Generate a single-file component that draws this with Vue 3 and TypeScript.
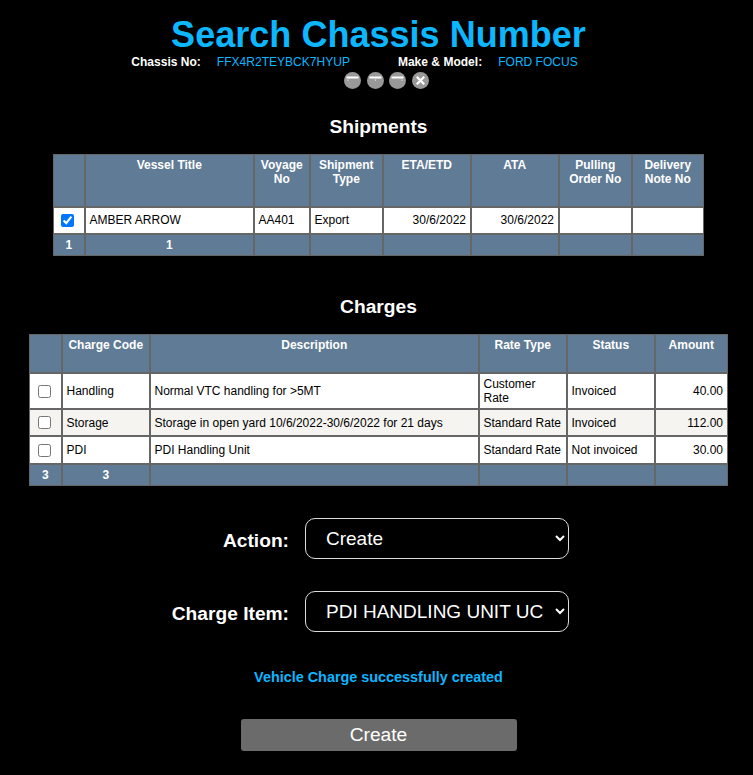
<script setup lang="ts">
import { ref } from 'vue'

interface Column { title: string; width: number }

const shipCols: Column[] = [
  { title: '', width: 32 },
  { title: 'Vessel Title', width: 169 },
  { title: 'Voyage No', width: 56 },
  { title: 'Shipment Type', width: 73 },
  { title: 'ETA/ETD', width: 88 },
  { title: 'ATA', width: 88 },
  { title: 'Pulling Order No', width: 73 },
  { title: 'Delivery Note No', width: 72 },
]

const chargeCols: Column[] = [
  { title: '', width: 33 },
  { title: 'Charge Code', width: 88 },
  { title: 'Description', width: 329 },
  { title: 'Rate Type', width: 88 },
  { title: 'Status', width: 88 },
  { title: 'Amount', width: 73 },
]

const charges = [
  { code: 'Handling', desc: 'Normal VTC handling for >5MT', rate: 'Customer Rate', status: 'Invoiced', amount: '40.00', cls: 'tall' },
  { code: 'Storage', desc: 'Storage in open yard 10/6/2022-30/6/2022 for 21 days', rate: 'Standard Rate', status: 'Invoiced', amount: '112.00', cls: 'alt' },
  { code: 'PDI', desc: 'PDI Handling Unit', rate: 'Standard Rate', status: 'Not invoiced', amount: '30.00', cls: 'last' },
]

const action = ref('Create')
const item = ref('PDI HANDLING UNIT UC')
const dotXs = [4, 8.5, 13]
</script>

<template>
  <main class="page">
    <h1 class="title">Search Chassis Number</h1>
    <div class="meta">
      <span class="pair"><b class="meta-label">Chassis No:</b><span class="meta-value">FFX4R2TEYBCK7HYUP</span></span>
      <span class="pair"><b class="meta-label">Make &amp; Model:</b><span class="meta-value">FORD FOCUS</span></span>
    </div>
    <div class="tools">
      <svg v-for="x in dotXs" :key="x" class="tool" viewBox="0 0 17 17" aria-hidden="true">
        <circle cx="8.5" cy="8.5" r="8.5" fill="#999" />
        <rect x="2.5" y="4.5" width="12" height="2" fill="#fff" />
        <rect :x="x - 0.6" y="7.5" width="1.2" height="1.2" fill="#e5e5e5" />
      </svg>
      <svg class="tool" viewBox="0 0 17 17" aria-hidden="true">
        <circle cx="8.5" cy="8.5" r="8.5" fill="#999" />
        <path d="M4.8 4.8 12.2 12.2M12.2 4.8 4.8 12.2" stroke="#fff" stroke-width="2.2" />
      </svg>
    </div>

    <h2 class="section ship-title">Shipments</h2>
    <table class="grid ship">
      <colgroup><col v-for="c in shipCols" :key="c.title" :style="{ width: c.width + 'px' }" /></colgroup>
      <thead>
        <tr class="head-ship"><th v-for="c in shipCols" :key="c.title">{{ c.title }}</th></tr>
      </thead>
      <tbody>
        <tr class="row-ship">
          <td class="center"><input type="checkbox" class="check" checked /></td>
          <td>AMBER ARROW</td>
          <td>AA401</td>
          <td>Export</td>
          <td class="right">30/6/2022</td>
          <td class="right">30/6/2022</td>
          <td></td>
          <td></td>
        </tr>
      </tbody>
      <tfoot>
        <tr class="foot"><td>1</td><td>1</td><td></td><td></td><td></td><td></td><td></td><td></td></tr>
      </tfoot>
    </table>

    <h2 class="section charge-title">Charges</h2>
    <table class="grid charge">
      <colgroup><col v-for="c in chargeCols" :key="c.title" :style="{ width: c.width + 'px' }" /></colgroup>
      <thead>
        <tr class="head-charge"><th v-for="c in chargeCols" :key="c.title">{{ c.title }}</th></tr>
      </thead>
      <tbody>
        <tr v-for="r in charges" :key="r.code" class="row-charge" :class="r.cls">
          <td class="center"><input type="checkbox" class="check" /></td>
          <td>{{ r.code }}</td>
          <td>{{ r.desc }}</td>
          <td>{{ r.rate }}</td>
          <td>{{ r.status }}</td>
          <td class="right">{{ r.amount }}</td>
        </tr>
      </tbody>
      <tfoot>
        <tr class="foot"><td>3</td><td>3</td><td></td><td></td><td></td><td></td></tr>
      </tfoot>
    </table>

    <div class="form">
      <label class="field">
        <span class="field-label">Action:</span>
        <select v-model="action" class="select"><option>Create</option></select>
      </label>
      <label class="field">
        <span class="field-label">Charge Item:</span>
        <select v-model="item" class="select"><option>PDI HANDLING UNIT UC</option></select>
      </label>
    </div>

    <p class="message">Vehicle Charge successfully created</p>
    <button type="button" class="submit">Create</button>
  </main>
</template>

<style scoped>
.page {
  display: flex;
  flex-direction: column;
  align-items: center;
  box-sizing: border-box;
  height: 775px;
  padding-left: 4px;
  overflow: hidden;
  color: #fff;
  font-family: "Liberation Sans", Arial, sans-serif;
}
.title {
  margin: 14px 0 0;
  font-size: 36px;
  line-height: 41px;
  font-weight: 700;
  letter-spacing: 0.03px;
  color: #0cb7ff;
}
.meta {
  display: flex;
  justify-content: center;
  margin-right: 48px;
  font-size: 12px;
  line-height: 14px;
  letter-spacing: 0.02px;
}
.pair {
  display: flex;
  gap: 16px;
}
.pair + .pair { margin-left: 48px; }
.meta-label { font-weight: 700; color: #fff; }
.meta-value { font-weight: 400; color: #0cb7ff; }
.tools {
  display: flex;
  gap: 5.5px;
  margin-top: 3px;
  margin-left: 16px;
}
.tool { width: 17px; height: 17px; display: block; }
.section {
  margin: 0;
  font-size: 19.2px;
  line-height: 22px;
  font-weight: 700;
  color: #fff;
}
.ship-title { margin-top: 27px; }
.charge-title { margin-top: 40px; }
.grid {
  border-collapse: separate;
  border-spacing: 0;
  table-layout: fixed;
  font-size: 12px;
  line-height: 14px;
  color: #000;
}
.ship { width: 651px; margin-top: 16px; }
.charge { width: 699px; margin-top: 16px; }
.grid th,
.grid td {
  border: 1px solid #666;
  padding: 0 4px 0 3.5px;
  overflow: hidden;
}
.grid th {
  background: #5f7b96;
  color: #fff;
  font-weight: 700;
  text-align: center;
  vertical-align: top;
  padding-top: 3px;
}
.grid td { background: #fff; vertical-align: middle; }
.head-ship { height: 53px; }
.head-charge { height: 39px; }
.row-ship { height: 27px; }
.grid .row-ship td { padding-bottom: 2px; }
.row-charge { height: 27px; }
.row-charge.tall { height: 36px; }
.row-charge.last { height: 28px; }
.row-charge.alt td { background: #f5f4f0; }
.grid .foot td {
  background: #5f7b96;
  color: #fff;
  font-weight: 700;
  text-align: center;
  height: 22px;
  box-sizing: border-box;
}
.grid td.center { padding: 0 5px 0 3px; }
.grid .row-ship td.center { padding: 0 6px 0 3px; }
.right { text-align: right; }
.check {
  display: block;
  width: 13px;
  height: 13px;
  margin: 0 auto;
}
.form {
  display: flex;
  flex-direction: column;
  gap: 32px;
  margin-top: 32px;
  margin-right: 33px;
}
.field {
  display: flex;
  align-items: center;
  gap: 16px;
}
.field-label {
  width: 134px;
  white-space: nowrap;
  display: flex;
  justify-content: flex-end;
  font-size: 19.2px;
  font-weight: 700;
  color: #fff;
  padding-top: 5px;
}
.select {
  width: 264px;
  height: 41px;
  box-sizing: border-box;
  padding: 0 8px 0 16px;
  background: #000;
  color: #fff;
  border: 1px solid #ddd;
  border-radius: 10px;
  font-family: "Liberation Sans", Arial, sans-serif;
  font-size: 19px;
}
.message {
  margin: 37px 0 0;
  font-size: 14.4px;
  line-height: 16px;
  font-weight: 700;
  color: #0cb7ff;
}
.submit {
  margin-top: 34px;
  width: 276px;
  height: 32px;
  border: 0;
  border-radius: 3px;
  background: #6b6b6b;
  color: #fff;
  font-family: "Liberation Sans", Arial, sans-serif;
  font-size: 19.2px;
}
</style>

<style>
html, body { background: #000; margin: 0; }
</style>
